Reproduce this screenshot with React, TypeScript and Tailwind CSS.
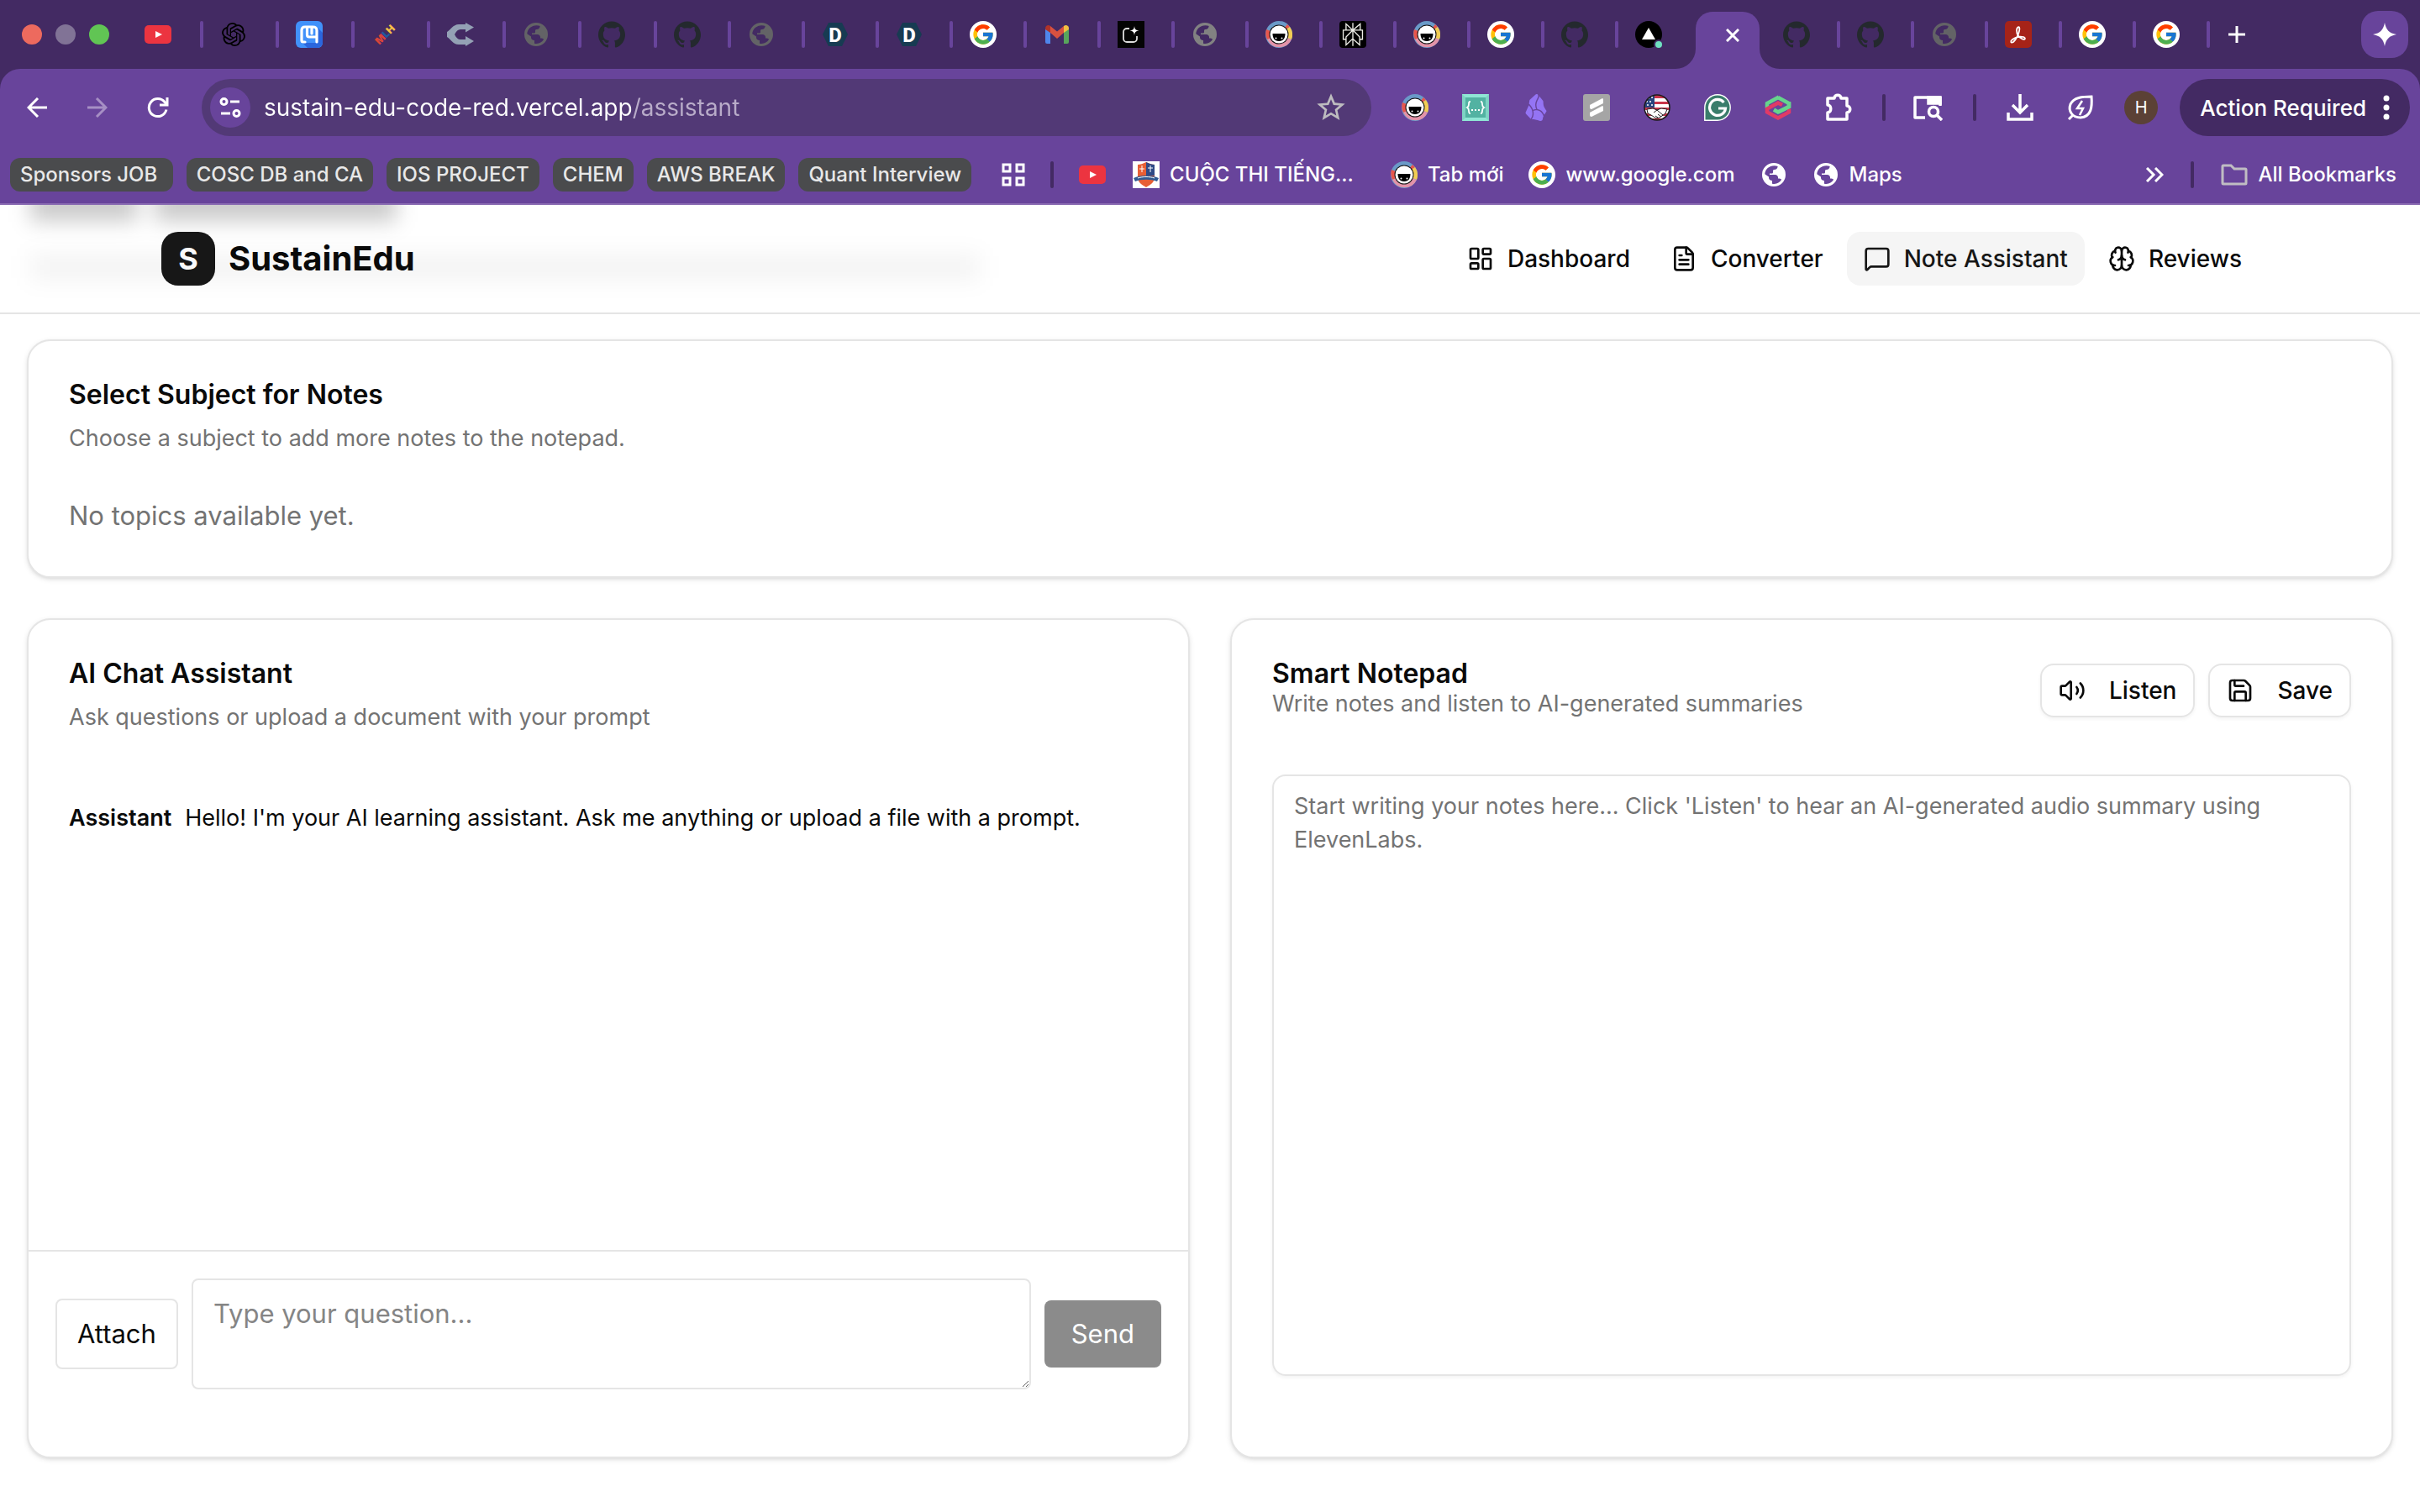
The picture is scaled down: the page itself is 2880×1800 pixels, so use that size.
import type { ReactNode } from 'react';
import { Brain, FileText, LayoutDashboard, MessageSquare, Save, Volume2 } from 'lucide-react';
import { FcGoogle } from 'react-icons/fc';
import { SiGithub, SiObsidian, SiOpenai, SiPerplexity } from 'react-icons/si';
import { MdStarBorder } from 'react-icons/md';

/* ---------- site icons ---------- */

const YouTubeIcon = () => (
    <svg viewBox="0 0 32 32" className="size-8">
        <rect y="5" width="32" height="22" rx="5" fill="#ec3440" />
        <path d="M13 12l8 4-8 4z" fill="#fff" />
    </svg>
);

const OpenAiIcon = () => (
    <span className="flex size-8 items-center justify-center">
        <SiOpenai className="size-7 text-black" />
    </span>
);

const MqIcon = () => (
    <svg viewBox="0 0 32 32" className="size-8">
        <rect width="32" height="32" rx="6" fill="#4191fa" />
        <path d="M26 8l6 6v12a6 6 0 0 1-6 6H14l-6-6h16z" fill="#2b66dd" />
        <path
            d="M11 25H9q-2 0-2-2V11q0-4 4-4h9q5 0 5 4v14M13.500 8v8.500q0 2.500 2.500 2.500h8M19 8v7"
            fill="none"
            stroke="#fff"
            strokeWidth="3.200"
            strokeLinejoin="round"
            strokeLinecap="round"
        />
    </svg>
);

const MlhIcon = () => (
    <svg viewBox="0 0 32 32" className="size-8 overflow-visible">
        <text
            x="16"
            y="20.500"
            textAnchor="middle"
            fontSize="12"
            fontWeight="900"
            fontFamily="Inter, sans-serif"
            transform="rotate(-45 16 16)"
        >
            <tspan fill="#d8453a">M</tspan>
            <tspan fill="#1f5a9e">L</tspan>
            <tspan fill="#f4bf45">H</tspan>
        </text>
    </svg>
);

const ForkIcon = () => (
    <svg viewBox="0 0 32 32" className="size-8" fill="#94a1b5">
        <path d="M0 13C4 11 7 4 14 4h8V2l10 5.500-10 6V10h-6c-3 0-5 2-7 6 2 4 4 6 7 6h6v-4l10 6-10 6v-2h-8C7 28 4 21 0 19z" />
    </svg>
);

const GlobeIcon = ({ className }: { className: string }) => (
    <svg viewBox="0 0 32 32" className={`size-8 ${className}`}>
        <path
            fillRule="evenodd"
            fill="currentColor"
            d="M16 2a14 14 0 1 0 0 28 14 14 0 0 0 0-28zM16.500 5.200c1.500 0 3 .3 4.200.8-.4 2.500-1.700 4-4.200 4-.9 0-1.500.7-1.500 1.500V13c0 1-.7 1.500-1.500 1.500H11V16h6.500c2 0 3.500 1.500 3.500 3.200v1.300c2 0 3.300.5 4.200 1.300A10.800 10.800 0 0 1 14 26.700V23c-2.300 0-4-1.500-4-3.600v-1l-4.700-3.200C5.700 9.500 10.500 5.200 16.500 5.200z"
        />
    </svg>
);

const GitHubIcon = () => <SiGithub className="size-8 text-[#24292e]" />;

const DIcon = () => (
    <svg viewBox="0 0 32 32" className="size-8">
        <path d="M8 2h16l7 14-7 14H8L1 16z" fill="#173b52" />
        <text x="16" y="25" textAnchor="middle" fontSize="24" fontWeight="800" fontFamily="Roboto, sans-serif" fill="#fff">
            D
        </text>
    </svg>
);

const GoogleIcon = () => (
    <span className="flex size-8 items-center justify-center rounded-full bg-white">
        <FcGoogle className="size-7" />
    </span>
);

const GmailIcon = () => (
    <svg viewBox="0 0 32 32" className="size-8">
        <path d="M2 9v16a2 2 0 0 0 2 2h4V13z" fill="#4f86ec" />
        <path d="M24 13v14h4a2 2 0 0 0 2-2V9z" fill="#58a55c" />
        <path d="M8 6l8 6.500L24 6v8l-8 7-8-7z" fill="#d85140" />
        <path d="M2 9c0-4 4-5 6-3v8l-6-4z" fill="#b03329" />
        <path d="M30 9c0-4-4-5-6-3v8l6-4z" fill="#f1bf42" />
    </svg>
);

const SparkBoxIcon = () => (
    <svg viewBox="0 0 32 32" className="size-8">
        <rect width="32" height="32" fill="#040404" />
        <path d="M14 9h-3a4 4 0 0 0-4 4v8a4 4 0 0 0 4 4h8a4 4 0 0 0 4-4v-3" fill="none" stroke="#ddd" strokeWidth="1.800" />
        <path d="M20 6c.5 4 1.500 5 5.500 5.500-4 .5-5 1.500-5.500 5.500-.5-4-1.500-5-5.500-5.500C18.500 11 19.500 10 20 6z" fill="#fff" />
    </svg>
);

const TabResizeIcon = () => (
    <svg viewBox="0 0 32 32" className="size-8">
        <circle cx="16" cy="16" r="16" fill="#6a9ac8" />
        <path d="M16 16L26 4l3 3zM16 16L1 10A16 16 0 0 0 2 22z" fill="#e8564c" />
        <path d="M16 16L29 7a16 16 0 0 1 2 15z" fill="#f2cd53" />
        <path d="M16 16L2 22a16 16 0 0 0 29 0z" fill="#e393a8" />
        <circle cx="16" cy="16" r="11.500" fill="#111" />
        <circle cx="16" cy="16" r="10.500" fill="#fff" />
        <path d="M8.500 15h15c0 5-2 9-7.500 9s-7.500-4-7.500-9z" fill="#000" />
        <circle cx="12.500" cy="20.500" r="1" fill="#fff" />
        <circle cx="19.500" cy="20.500" r="1" fill="#fff" />
    </svg>
);

const PerplexityIcon = () => (
    <span className="flex size-8 items-center justify-center rounded-sm bg-black">
        <SiPerplexity className="size-7 text-[#eeeee8]" />
    </span>
);

const VercelIcon = () => (
    <svg viewBox="0 0 32 32" className="size-8">
        <circle cx="16" cy="16" r="16" fill="#000" />
        <path d="M16 8l8 14H8z" fill="#fff" />
        <circle cx="28" cy="28" r="6" fill="#432a63" />
        <circle cx="28" cy="28" r="4" fill="#6fe0c0" />
    </svg>
);

const PdfIcon = () => (
    <svg viewBox="0 0 32 32" className="size-8">
        <rect width="32" height="32" rx="5" fill="#a62318" />
        <path
            d="M15 8c2-2 3 0 2 4-1 5-4 10-7 13-3 2-4-1-1-3 4-3 9-4 13-3 4 2 1 4-2 2-4-2-6-6-6-10 0-1 0-2 1-3z"
            fill="none"
            stroke="#fff"
            strokeWidth="1.800"
        />
    </svg>
);

const BracesIcon = () => (
    <svg viewBox="0 0 32 32" className="size-8">
        <rect width="32" height="32" fill="#8fe6d5" />
        <path d="M0 0l4 4v24l-4 4zM32 0l-4 4v24l4 4z" fill="#7ed3c4" />
        <rect x="4" y="4" width="24" height="24" fill="#52b2a2" />
        <path
            d="M10 9c-2 0-2 1-2 3s0 3-2 4c2 1 2 2 2 4s0 3 2 3M22 9c2 0 2 1 2 3s0 3 2 4c-2 1-2 2-2 4s0 3-2 3"
            fill="none"
            stroke="#fff"
            strokeWidth="1.800"
        />
        <path d="M11 18h2v2h-2zM15 18h2v2h-2zM19 18h2v2h-2z" fill="#fff" />
    </svg>
);

const SlashIcon = () => (
    <svg viewBox="0 0 32 32" className="size-8">
        <rect width="32" height="32" rx="3" fill="#a5a5a5" />
        <path d="M8 13l15-8q1 0 1 2v4L10 18q-2 0-2-2zM8 22l15-8q1 0 1 2v4l-14 7q-2 0-2-2z" fill="#fff" />
    </svg>
);

const FlagIcon = () => (
    <svg viewBox="0 0 32 32" className="size-8">
        <defs>
            <clipPath id="flag">
                <circle cx="16" cy="16" r="15" />
            </clipPath>
        </defs>
        <g clipPath="url(#flag)">
            <path d="M0 0h32v32H0z" fill="#fff" />
            <path d="M0 1h32v4H0zM0 9h32v3H0zM0 16h32v3H0zM0 23h32v3H0zM0 29h32v3H0z" fill="#c8354b" />
            <path d="M0 0h13v16H0z" fill="#28457f" />
            <g fill="#fff">
                <circle cx="6" cy="5" r="1" />
                <circle cx="10" cy="4" r="1" />
                <circle cx="4" cy="9" r="1" />
                <circle cx="8" cy="9" r="1" />
                <circle cx="5" cy="13" r="1" />
                <circle cx="10" cy="13" r="1" />
            </g>
            <path
                d="M4 18l7-1 5 2 5-2 7 1-2 5-7 5-4 1-6-4-4-2zM12 22l4-3 7 6M14 26l3 2M17 24l4 3"
                fill="#fff"
                stroke="#222"
            />
        </g>
        <circle cx="16" cy="16" r="15" fill="none" stroke="#1a1a1a" strokeWidth="1.500" />
    </svg>
);

const GrammarlyIcon = () => (
    <svg viewBox="0 0 32 32" className="size-8">
        <path d="M.8 31.200V16A15.200 15.200 0 1 1 16 31.200z" fill="#3a7d6b" stroke="#fff" strokeWidth="1.400" />
        <path d="M23.500 10A9.500 9.500 0 1 0 25.500 17H17" fill="none" stroke="#fff" strokeWidth="3.200" />
    </svg>
);

const KnotIcon = () => (
    <svg viewBox="0 0 32 32" className="size-8">
        {/* green loop above, red loop below, each with an open centre */}
        <path d="M16 4L29 11v4l-13 6.500-5-3" fill="none" stroke="#66d58c" strokeWidth="4.500" />
        <path d="M17 3.500L3 11v6" fill="none" stroke="#66d58c" strokeWidth="4.500" />
        <path d="M21 13l-5-2.500L3 17.500v4L16 28.500 29 21.500v-4" fill="none" stroke="#e13a66" strokeWidth="4.500" />
        <path d="M29 9v6l-13 6.500" fill="none" stroke="#66d58c" strokeWidth="4.500" />
    </svg>
);

const ShieldIcon = () => (
    <svg viewBox="0 0 32 32" className="size-8">
        <path d="M0 0h32v32H0z" fill="#fff" />
        <path d="M6 4c3 0 6-1 10-3 4 2 7 3 10 3v15c0 6-5 9-10 12C11 28 6 25 6 19z" fill="#e75f35" />
        <path d="M16 1c4 2 7 3 10 3v13H16z" fill="#2f4a86" />
        <path d="M18 8h6M21 5v8M11 5v8M8 9h6" stroke="#fff" strokeWidth="1" />
        <path d="M1 20c8-4 22-4 30 0l-2 4c-7-3-19-3-26 0z" fill="#2f5a93" />
        <path d="M6 20c6-2 14-2 20 0" stroke="#fff" strokeWidth="1" fill="none" />
    </svg>
);

/* ---------- browser chrome ---------- */

const tabs: { icon: ReactNode; label: string; wide?: boolean; last?: boolean }[] = [
    { icon: <YouTubeIcon />, label: 'YouTube', wide: true },
    { icon: <OpenAiIcon />, label: 'ChatGPT', wide: true },
    { icon: <MqIcon />, label: 'Mail', wide: true },
    { icon: <MlhIcon />, label: 'MLH', wide: true },
    { icon: <ForkIcon />, label: 'Code', wide: true },
    { icon: <GlobeIcon className="text-[#636366]" />, label: 'Site', wide: true },
    { icon: <GitHubIcon />, label: 'GitHub', wide: true },
    { icon: <GitHubIcon />, label: 'GitHub' },
    { icon: <GlobeIcon className="text-[#636366]" />, label: 'Site' },
    { icon: <DIcon />, label: 'Devpost' },
    { icon: <DIcon />, label: 'Devpost' },
    { icon: <GoogleIcon />, label: 'Google' },
    { icon: <GmailIcon />, label: 'Gmail' },
    { icon: <SparkBoxIcon />, label: 'Builder' },
    { icon: <GlobeIcon className="text-[#828282]" />, label: 'Site' },
    { icon: <TabResizeIcon />, label: 'New tab' },
    { icon: <PerplexityIcon />, label: 'Perplexity' },
    { icon: <TabResizeIcon />, label: 'New tab' },
    { icon: <GoogleIcon />, label: 'Google' },
    { icon: <GitHubIcon />, label: 'GitHub' },
    { icon: <VercelIcon />, label: 'Vercel', last: true },
];

const tabsAfter: typeof tabs = [
    { icon: <GitHubIcon />, label: 'GitHub' },
    { icon: <GitHubIcon />, label: 'GitHub' },
    { icon: <GlobeIcon className="text-[#636366]" />, label: 'Site' },
    { icon: <PdfIcon />, label: 'PDF' },
    { icon: <GoogleIcon />, label: 'Google' },
    { icon: <GoogleIcon />, label: 'Google' },
];

function Tab({ icon, label, wide, last }: (typeof tabs)[number]) {
    return (
        <button
            aria-label={label}
            className={`flex h-8 shrink-0 items-center justify-between pl-5 ${wide ? 'w-[90px]' : 'w-[88px]'}`}
        >
            {icon}
            {!last && <span className="h-8 w-1 rounded-full bg-[#68449b]" />}
        </button>
    );
}

function TabStrip() {
    return (
        <div className="flex h-[82px] items-end bg-[#432a63]">
            <div className="flex h-[82px] w-[152px] shrink-0 items-center gap-4 pl-[26px]">
                <span className="size-6 rounded-full bg-[#ed6a5e]" />
                <span className="size-6 rounded-full bg-[#817396]" />
                <span className="size-6 rounded-full bg-[#61c554]" />
            </div>
            <div className="flex h-[82px] items-center">
                {tabs.map((tab, i) => (
                    <Tab key={i} {...tab} />
                ))}
            </div>
            <div className="flex h-[68px] w-[88px] shrink-0 items-end justify-center pr-1">
                <svg viewBox="0 0 24 24" className="-ml-6 size-6 shrink-0 fill-[#68449b]">
                    <path d="M24 0v24H0A24 24 0 0 0 24 0z" />
                </svg>
                <button
                    aria-label="Close tab"
                    className="flex h-[68px] w-[76px] shrink-0 items-center justify-center rounded-t-[20px] bg-[#68449b] pb-3 pl-3"
                >
                    <svg viewBox="0 0 16 16" className="size-4 stroke-white stroke-[3]">
                        <path d="M1 1l14 14M15 1L1 15" />
                    </svg>
                </button>
                <svg viewBox="0 0 24 24" className="-mr-6 size-6 shrink-0 fill-[#68449b]">
                    <path d="M0 0v24h24A24 24 0 0 1 0 0z" />
                </svg>
            </div>
            <div className="flex h-[82px] items-center">
                {tabsAfter.map((tab, i) => (
                    <Tab key={i} {...tab} />
                ))}
            </div>
            <div className="flex h-[82px] flex-1 items-center justify-between pr-3.5 pl-5">
                <button aria-label="New tab">
                    <svg viewBox="0 0 24 24" className="size-6 stroke-white stroke-[3]">
                        <path d="M12 2v20M2 12h20" />
                    </svg>
                </button>
                <button aria-label="Gemini" className="flex size-14 items-center justify-center rounded-[20px] bg-[#68449b]">
                    <svg viewBox="0 0 28 28" className="size-7 fill-white">
                        <path d="M14 0c1.500 8.500 5.500 12.500 14 14-8.500 1.500-12.500 5.500-14 14C12.500 19.500 8.500 15.500 0 14 8.500 12.500 12.500 8.500 14 0z" />
                    </svg>
                </button>
            </div>
        </div>
    );
}

function ToolButton({ label, children }: { label: string; children: ReactNode }) {
    return (
        <button aria-label={label} className="flex w-[72px] shrink-0 items-center justify-center">
            {children}
        </button>
    );
}

function Toolbar() {
    return (
        <div className="bg-[#432a63]">
            <div className="flex h-[92px] items-center rounded-t-3xl bg-[#68449b] pr-3 pl-2">
                <ToolButton label="Back">
                    <svg viewBox="0 0 24 24" className="size-6 fill-none stroke-white stroke-3">
                        <path d="M24 12H2M13 1L2 12l11 11" />
                    </svg>
                </ToolButton>
                <ToolButton label="Forward">
                    <svg viewBox="0 0 24 24" className="size-6 fill-none stroke-[#a68fc4] stroke-3">
                        <path d="M0 12h22M11 1l11 11-11 11" />
                    </svg>
                </ToolButton>
                <ToolButton label="Reload">
                    <svg viewBox="0 0 26 26" className="size-[26px] fill-none stroke-white stroke-3">
                        <path d="M23 15.500A10.500 10.500 0 1 1 21 6.500l3 3M24 1v9h-9" />
                    </svg>
                </ToolButton>

                <div className="ml-4 flex h-[68px] flex-1 items-center rounded-full bg-[#523976] pr-7 pl-2.5">
                    <button aria-label="Site information" className="flex size-12 shrink-0 items-center justify-center rounded-full bg-[#68449b]">
                        <svg viewBox="0 0 26 26" className="size-[26px] fill-none stroke-white stroke-3">
                            <circle cx="5.500" cy="6" r="3.500" />
                            <path d="M13 6h11M2 20h11" />
                            <circle cx="20.500" cy="20" r="3.500" />
                        </svg>
                    </button>
                    {/* the path part of the address is dimmed */}
                    <input
                        type="text"
                        aria-label="Address"
                        defaultValue="sustain-edu-code-red.vercel.app/assistant"
                        className="ml-4 min-w-0 flex-1 bg-linear-to-r from-white from-[437px] to-[#b9acc9] to-[437px] bg-clip-text text-[28px] leading-10 text-transparent outline-none"
                    />
                    <button aria-label="Bookmark this page">
                        <MdStarBorder className="size-10 text-[#bdbcbf]" />
                    </button>
                </div>

                <div className="ml-4 flex shrink-0 items-center">
                    <ToolButton label="New tab page"><TabResizeIcon /></ToolButton>
                    <ToolButton label="JSON formatter"><BracesIcon /></ToolButton>
                    <ToolButton label="Obsidian"><SiObsidian className="size-8 text-[#9474f4]" /></ToolButton>
                    <ToolButton label="Simplify"><SlashIcon /></ToolButton>
                    <ToolButton label="Job helper"><FlagIcon /></ToolButton>
                    <ToolButton label="Grammarly"><GrammarlyIcon /></ToolButton>
                    <ToolButton label="Clips"><KnotIcon /></ToolButton>
                    <ToolButton label="Extensions">
                        <svg viewBox="0 0 36 36" className="size-9 fill-none stroke-white stroke-[3.500]">
                            <path d="M5 7h8c0-5 8-5 8 0h7v9c5 0 5 8 0 8v8H5v-8c5 0 5-9 0-9z" strokeLinejoin="round" />
                        </svg>
                    </ToolButton>
                </div>
                <span className="ml-4 h-8 w-1 rounded-full bg-[#432a63]" />
                <button aria-label="Search tabs" className="ml-8 shrink-0">
                    <svg viewBox="0 0 36 32" className="h-8 w-9 fill-none stroke-white stroke-[3.500]">
                        <path d="M15 28H3V4h30v10" strokeLinejoin="round" />
                        <path d="M19 4h14v7H19z" fill="#fff" />
                        <circle cx="25" cy="21" r="5.500" />
                        <path d="M29 25l6 6" />
                    </svg>
                </button>
                <span className="ml-9 h-8 w-1 rounded-full bg-[#432a63]" />
                <div className="ml-4 flex shrink-0">
                    <ToolButton label="Downloads">
                        <svg viewBox="0 0 32 32" className="size-8 fill-none stroke-white stroke-[3.500]">
                            <path d="M16 0v21M7 13l9 9 9-9M2 22v8h28v-8" />
                        </svg>
                    </ToolButton>
                    <ToolButton label="Energy saver">
                        <svg viewBox="0 0 32 32" className="size-8 fill-none stroke-white stroke-3">
                            <path d="M29 3c1 12 0 24-13 25C6 28 1 20 4 12 8 4 18 3 29 3zM2 30l5-5" />
                            <path d="M18 8l-6 9h7l-4 8" strokeWidth="2.500" />
                        </svg>
                    </ToolButton>
                    <ToolButton label="Profile">
                        <span className="flex size-10 items-center justify-center rounded-full bg-[#5b4136] text-[20px] text-white">
                            H
                        </span>
                    </ToolButton>
                </div>
                <button className="ml-2.5 flex h-[68px] shrink-0 items-center gap-5 rounded-full bg-[#432a63] px-6 text-[26px] font-medium text-white">
                    Action Required
                    <svg viewBox="0 0 8 30" className="h-[30px] w-2 fill-white">
                        <circle cx="4" cy="4" r="3.500" />
                        <circle cx="4" cy="15" r="3.500" />
                        <circle cx="4" cy="26" r="3.500" />
                    </svg>
                </button>
            </div>
        </div>
    );
}

const groups = ['Sponsors JOB ', 'COSC DB and CA', 'IOS PROJECT', 'CHEM', 'AWS BREAK', 'Quant Interview'];

function Bookmark({ icon, children }: { icon: ReactNode; children: ReactNode }) {
    return (
        <a href="#" className="flex items-center gap-3 whitespace-nowrap">
            {icon}
            {children}
        </a>
    );
}

function BookmarksBar() {
    return (
        <div className="flex h-[70px] items-center border-b-2 border-[#8a6cb3] bg-[#68449b] pr-7 pl-3 text-[24px] leading-8 font-medium text-white">
            <div className="flex gap-4">
                {groups.map(group => (
                    <button key={group} className="h-10 rounded-xl bg-[#4a4b4d] px-3 whitespace-pre text-[#e8e8e8]">
                        {group}
                    </button>
                ))}
            </div>
            <svg viewBox="0 0 28 28" className="ml-9 size-7 shrink-0 fill-none stroke-white stroke-3">
                <path d="M2 2h8v8H2zM18 2h8v8h-8zM2 18h8v8H2zM18 18h8v8h-8z" />
            </svg>
            <span className="mx-[30px] h-8 w-1 shrink-0 rounded-full bg-[#432a63]" />
            <div className="flex items-center gap-8">
                <a href="#" aria-label="YouTube"><YouTubeIcon /></a>
                <Bookmark icon={<ShieldIcon />}>CUỘC THI TIẾNG...</Bookmark>
                <div className="ml-3 flex items-center gap-[30px]">
                    <Bookmark icon={<TabResizeIcon />}>Tab mới</Bookmark>
                    <Bookmark icon={<GoogleIcon />}>www.google.com</Bookmark>
                    <a href="#" aria-label="Site"><GlobeIcon className="text-white" /></a>
                    <Bookmark icon={<GlobeIcon className="text-white" />}>Maps</Bookmark>
                </div>
            </div>
            <button aria-label="More bookmarks" className="ml-auto">
                <svg viewBox="0 0 22 18" className="h-[18px] w-[22px] fill-none stroke-white stroke-3">
                    <path d="M2 1l8 8-8 8M12 1l8 8-8 8" />
                </svg>
            </button>
            <span className="mx-8 h-8 w-1 shrink-0 rounded-full bg-[#432a63]" />
            <Bookmark
                icon={
                    <svg viewBox="0 0 32 26" className="h-[26px] w-8 fill-none stroke-[#c0bdc3] stroke-3">
                        <path d="M2 3q0-1 1-1h9l4 4h13q1 0 1 1v16q0 1-1 1H3q-1 0-1-1z" />
                    </svg>
                }
            >
                All Bookmarks
            </Bookmark>
        </div>
    );
}

/* ---------- page ---------- */

const navItems = [
    { label: 'Dashboard', icon: LayoutDashboard },
    { label: 'Converter', icon: FileText },
    { label: 'Note Assistant', icon: MessageSquare, active: true },
    { label: 'Reviews', icon: Brain },
];

function Header() {
    return (
        <header className="relative overflow-hidden border-b-2 border-[#e5e5e5] bg-white">
            {/* scrolled page heading showing through the translucent bar */}
            <div aria-hidden="true" className="absolute -top-6 left-9 flex h-11 gap-5 blur-[12px]">
                <span className="w-32 bg-black/20" />
                <span className="w-72 bg-black/20" />
            </div>
            <div aria-hidden="true" className="absolute top-[60px] left-9 h-7 w-[1130px] bg-black/5 blur-[14px]" />
            <div className="relative mx-auto flex h-32 max-w-[2560px] items-center justify-between px-8">
                <a href="#" className="flex items-center gap-4">
                    <span className="flex size-16 items-center justify-center rounded-[20px] bg-[#171717] text-[36px] font-bold text-[#fafafa]">
                        S
                    </span>
                    <span className="text-[40px] leading-[56px] font-bold">SustainEdu</span>
                </a>
                <nav className="flex gap-2">
                    {navItems.map(({ label, icon: Icon, active }) => (
                        <a
                            key={label}
                            href="#"
                            className={`flex h-16 items-center gap-4 rounded-2xl px-5 text-[28px] font-medium ${active ? 'bg-[#f5f5f5] text-[#171717]' : ''}`}
                        >
                            <Icon className="size-8" />
                            {label}
                        </a>
                    ))}
                </nav>
            </div>
        </header>
    );
}

function Card({ children }: { children: ReactNode }) {
    return (
        <section className="flex flex-col rounded-[28px] border-2 border-[#e5e5e5] bg-white py-12 shadow-[0_2px_6px_rgb(0_0_0/0.1),0_2px_4px_-2px_rgb(0_0_0/0.1)]">
            {children}
        </section>
    );
}

function SubjectCard() {
    return (
        <Card>
            <div className="flex flex-col gap-4 px-12">
                <h2 className="text-[32px] leading-8 font-semibold">Select Subject for Notes</h2>
                <p className="text-[27px] leading-10 text-[#737373]">Choose a subject to add more notes to the notepad.</p>
            </div>
            <p className="mt-12 px-12 text-[31px] leading-[48px] text-[#737373]">No topics available yet.</p>
        </Card>
    );
}

function ChatCard() {
    return (
        <Card>
            <div className="flex flex-col gap-4 px-12">
                <h2 className="text-[32px] leading-8 font-semibold">AI Chat Assistant</h2>
                <p className="text-[27px] leading-10 text-[#737373]">Ask questions or upload a document with your prompt</p>
            </div>
            <div className="mt-12 flex-1 px-12 py-8 text-[27px] leading-10">
                <span className="mr-4 font-semibold">Assistant</span>
                <span>Hello! I'm your AI learning assistant. Ask me anything or upload a file with a prompt.</span>
            </div>
            <form className="flex items-center gap-4 border-t-2 border-[#e5e5e5] p-8">
                <button type="button" className="h-[84px] rounded-lg border-2 border-[#e5e5e5] px-6 text-[31px]">
                    Attach
                </button>
                <textarea
                    aria-label="Your question"
                    placeholder="Type your question..."
                    className="h-[132px] min-w-0 flex-1 rounded-lg border-2 border-[#e5e5e5] px-6 py-4 text-[31px] leading-[48px] placeholder:text-[#858585]"
                />
                <button type="button" className="h-20 rounded-lg bg-[#8b8b8b] px-8 text-[31px] text-white">
                    Send
                </button>
            </form>
        </Card>
    );
}

function NotepadCard() {
    return (
        <Card>
            <div className="flex items-center justify-between px-12">
                <div>
                    <h2 className="text-[32px] leading-8 font-semibold">Smart Notepad</h2>
                    <p className="text-[27px] leading-10 text-[#737373]">Write notes and listen to AI-generated summaries</p>
                </div>
                <div className="flex gap-4">
                    <button className="flex h-16 items-center gap-7 rounded-2xl border-2 border-[#e5e5e5] px-5 text-[28px] font-medium shadow-[0_2px_4px_rgb(0_0_0/0.05)]">
                        <Volume2 className="size-8" />
                        Listen
                    </button>
                    <button className="flex h-16 items-center gap-7 rounded-2xl border-2 border-[#e5e5e5] px-5 text-[28px] font-medium shadow-[0_2px_4px_rgb(0_0_0/0.05)]">
                        <Save className="size-8" />
                        Save
                    </button>
                </div>
            </div>
            <div className="mt-12 flex flex-1 px-12 pt-4 pb-12">
                <textarea
                    aria-label="Notes"
                    placeholder="Start writing your notes here... Click 'Listen' to hear an AI-generated audio summary using ElevenLabs."
                    className="w-full resize-none rounded-2xl border-2 border-[#e5e5e5] px-6 py-4 text-[27px] leading-10 shadow-[0_2px_4px_rgb(0_0_0/0.05)] placeholder:text-[#737373]"
                />
            </div>
        </Card>
    );
}

export default function App() {
    return (
        <div className="min-h-screen bg-white font-['Inter','Liberation_Sans',sans-serif] text-[#0a0a0a]">
            <TabStrip />
            <Toolbar />
            <BookmarksBar />
            <Header />
            <main className="flex flex-col gap-12 px-8 pt-[30px] pb-16">
                <SubjectCard />
                <div className="grid min-h-[1000px] grid-cols-2 gap-12">
                    <ChatCard />
                    <NotepadCard />
                </div>
            </main>
        </div>
    );
}
